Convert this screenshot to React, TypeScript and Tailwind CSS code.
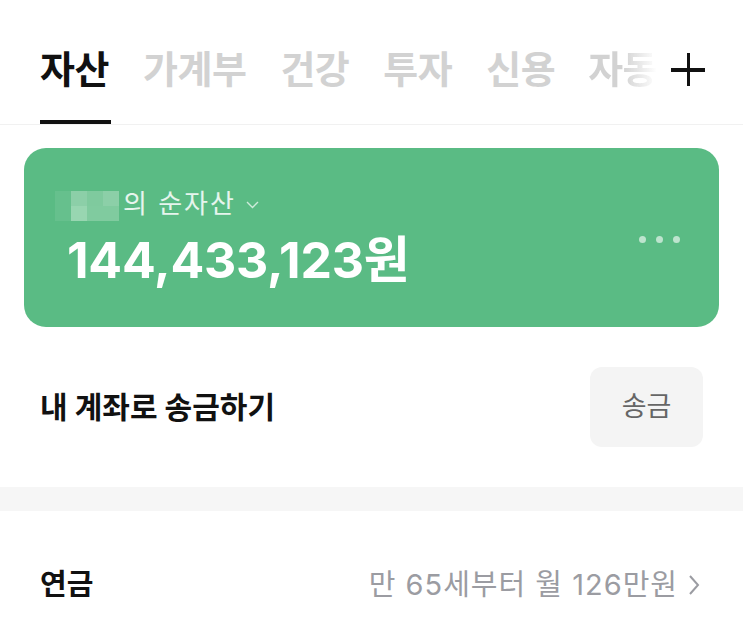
import React from "react";

const font = { fontFamily: 'Inter, "Noto Sans CJK KR", "Noto Sans", sans-serif' };

function Tabs() {
  const tabs = ["건강", "투자", "신용"];
  return (
    <div className="relative h-[125px] border-b border-[#f1f1f1]">
      <div className="flex items-start pt-[42px] pl-[40px] h-full">
        <div className="flex flex-col items-start">
          <span className="text-[38px] leading-[54px] font-bold text-[#111] tracking-[-0.5px]">자산</span>
          <div className="mt-[24px] h-[4px] w-[71px] bg-[#111]" />
        </div>
        <span className="ml-[32px] text-[38px] leading-[54px] font-bold text-[#d2d2d2] tracking-[-0.5px]">가계부</span>
        {tabs.map((t) => (
          <span key={t} className="ml-[34px] text-[38px] leading-[54px] font-bold text-[#d2d2d2] tracking-[-0.5px]">
            {t}
          </span>
        ))}
        <span
          className="ml-[33px] text-[38px] leading-[54px] font-bold tracking-[-0.5px] bg-clip-text text-transparent"
          style={{ backgroundImage: "linear-gradient(90deg, #d2d2d2 0%, #d2d2d2 50%, rgba(210,210,210,0) 100%)" }}
        >
          자동
        </span>
        <div className="ml-[14px] mt-[11px] w-[34px] h-[33px] relative">
          <div className="absolute left-[15.5px] top-0 w-[3.5px] h-[33px] bg-[#111]" />
          <div className="absolute top-[15px] left-0 h-[3.5px] w-[34px] bg-[#111]" />
        </div>
      </div>
    </div>
  );
}

function Card() {
  return (
    <div className="mx-[24px] mt-[23px] h-[179px] rounded-[22px] bg-[#5abb84] relative px-[43px] pt-[38px]">
      <div className="flex items-center h-[36px]">
        <div className="relative flex items-center pl-[30px]">
          <span className="text-[26px] text-white/85 leading-[32px] tracking-[2px]">님의 순자산</span>
          <div className="absolute left-[4px] top-[3px] grid grid-cols-3 grid-rows-2 w-[48px] h-[30px]">
            <div className="bg-[#8ccfa8]" />
            <div className="bg-[#7fca9e]" />
            <div className="bg-[#8ccfa8]" />
            <div className="bg-[#98d6b1]" />
            <div className="bg-[#80cb9f]" />
            <div className="bg-[#80cb9f]" />
          </div>
          <div className="absolute left-[-12px] top-[3px] w-[16px] h-[30px] bg-[#66c08d]" />
          <svg className="ml-[10px] mt-[2px]" width="13" height="8" viewBox="0 0 13 8" fill="none">
            <path d="M1 1l5.5 5.5L12 1" stroke="rgba(255,255,255,0.7)" strokeWidth="1.4" />
          </svg>
        </div>
      </div>
      <div className="mt-[9px] text-[50px] leading-[58px] font-bold text-white tracking-[-0.2px]">144,433,123원</div>
      <div className="absolute right-[39px] top-[88px] flex gap-[10px]">
        <div className="w-[7px] h-[7px] rounded-full bg-white/60" />
        <div className="w-[7px] h-[7px] rounded-full bg-white/60" />
        <div className="w-[7px] h-[7px] rounded-full bg-white/60" />
      </div>
    </div>
  );
}

export default function App() {
  return (
    <div className="w-[743px] h-[641px] bg-white overflow-hidden" style={font}>
      <Tabs />
      <Card />
      <div className="flex items-center justify-between pl-[40px] pr-[40px] mt-[40px] h-[80px]">
        <span className="text-[30px] font-bold text-[#111] tracking-[0px]">내 계좌로 송금하기</span>
        <div className="w-[113px] h-[80px] rounded-[12px] bg-[#f4f4f4] flex items-center justify-center">
          <span className="text-[27px] text-[#666] tracking-[0px]">송금</span>
        </div>
      </div>
      <div className="mt-[40px] h-[24px] bg-[#f6f6f6]" />
      <div className="flex items-center justify-between pl-[40px] pr-[43px] h-[148px]">
        <span className="text-[29px] font-bold text-[#111] tracking-[0px]">연금</span>
        <div className="flex items-center">
          <span className="text-[29px] text-[#9b9ca2] tracking-[1px]">만 65세부터 월 126만원</span>
          <svg className="ml-[10px]" width="12" height="22" viewBox="0 0 12 22" fill="none">
            <path d="M2 2l8 9-8 9" stroke="#9b9ca2" strokeWidth="2" />
          </svg>
        </div>
      </div>
    </div>
  );
}
